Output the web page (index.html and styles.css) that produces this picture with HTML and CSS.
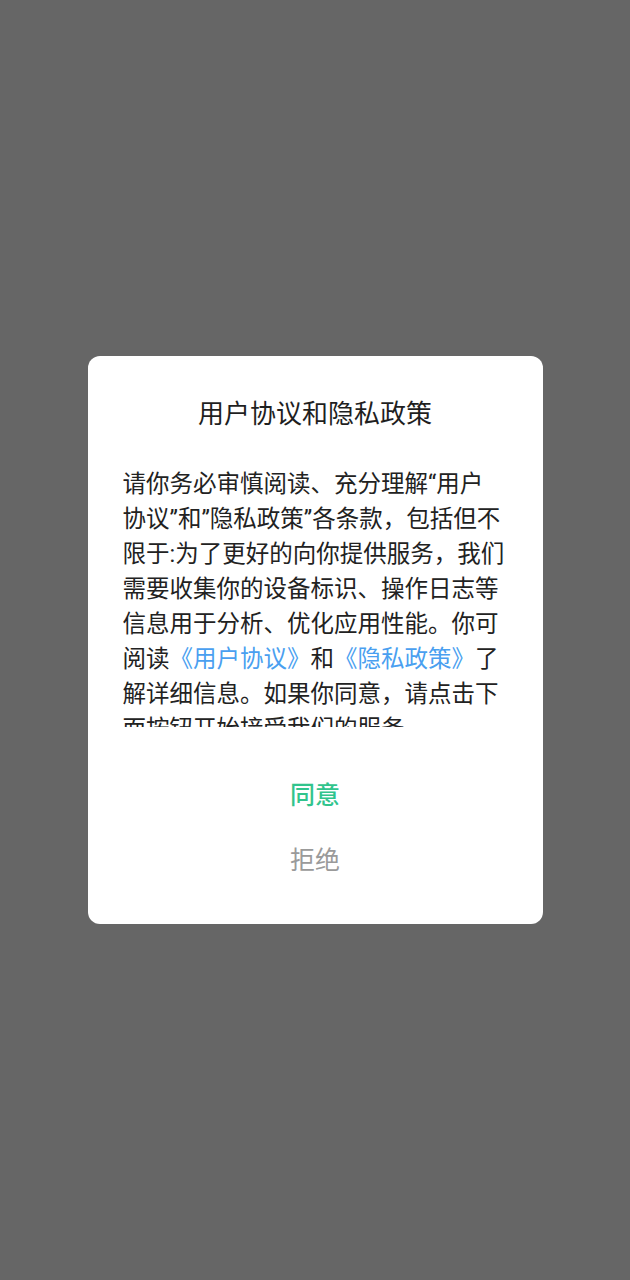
FILE: index.html
```html
<!DOCTYPE html>
<html lang="zh-CN">
<head>
<meta charset="utf-8">
<title>用户协议和隐私政策</title>
<link rel="stylesheet" href="styles.css">
</head>
<body>
<div class="screen">
  <div class="dialog">
    <div class="title">用户协议和隐私政策</div>
    <div class="content">
      <p class="text">请你务必审慎阅读、充分理解“用户协议”和”隐私政策”各条款，包括但不限于:为了更好的向你提供服务，我们需要收集你的设备标识、操作日志等信息用于分析、优化应用性能。你可阅读<span class="link">《用户协议》</span>和<span class="link">《隐私政策》</span>了解详细信息。如果你同意，请点击下面按钮开始接受我们的服务。</p>
    </div>
    <div class="actions">
      <div class="btn btn-agree">同意</div>
      <div class="btn btn-reject">拒绝</div>
    </div>
  </div>
</div>
</body>
</html>
```

FILE: styles.css
```css
html, body {
  margin: 0;
  padding: 0;
}
body {
  background: #666666;
  font-family: Roboto, "Noto Sans CJK SC", sans-serif;
}
.screen {
  width: 630px;
  height: 1280px;
  display: flex;
  align-items: center;
  justify-content: center;
}
.dialog {
  width: 455px;
  height: 568px;
  box-sizing: border-box;
  background: #ffffff;
  border-radius: 12px;
  padding-top: 40px;
  display: flex;
  flex-direction: column;
}
.title {
  font-size: 26px;
  line-height: 36px;
  color: #1f1f1f;
  text-align: center;
}
.content {
  margin: 35px 37px 0 35px;
  height: 260px;
  overflow: hidden;
}
.text {
  margin: 0;
  font-size: 23.5px;
  line-height: 35px;
  color: #222222;
  word-break: break-all;
  text-spacing-trim: space-all;
}
.link {
  color: #4a9ff0;
}
.actions {
  margin-top: 36px;
  display: flex;
  flex-direction: column;
}
.btn {
  height: 65px;
  line-height: 65px;
  text-align: center;
  font-size: 25px;
}
.btn-agree {
  color: #31c48d;
  font-weight: 500;
}
.btn-reject {
  color: #9a9a9a;
}
```
